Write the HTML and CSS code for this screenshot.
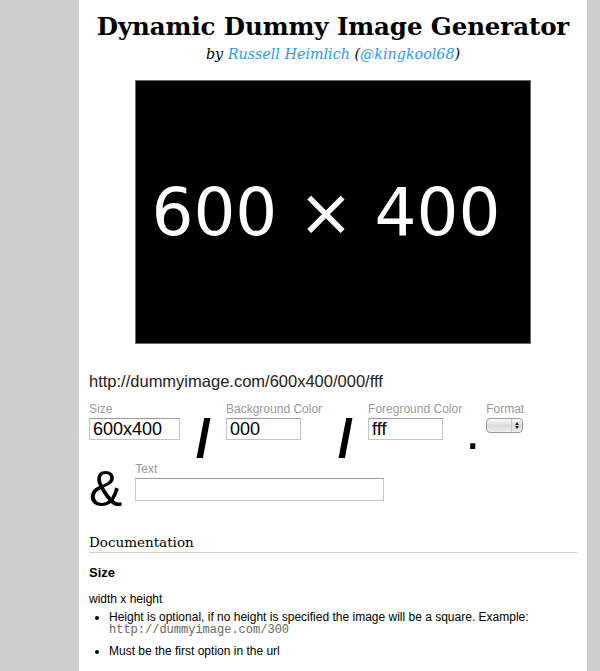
FILE: index.html
```html
<!DOCTYPE html>
<html>
<head>
<meta charset="utf-8">
<title>Dynamic Dummy Image Generator</title>
<link rel="stylesheet" href="styles.css">
</head>
<body>
<div class="page">
  <h1 class="title">Dynamic Dummy Image Generator</h1>
  <p class="byline">by <a href="#">Russell Heimlich</a> (<a href="#">@kingkool68</a>)</p>

  <div class="preview"><span class="preview-text">600 × 400</span></div>

  <p class="url">http://dummyimage.com/600x400/000/fff</p>

  <div class="form-row">
    <div class="field">
      <label class="label">Size</label>
      <input class="input input-size" type="text" value="600x400">
    </div>
    <span class="sep slash">/</span>
    <div class="field">
      <label class="label">Background Color</label>
      <input class="input input-color" type="text" value="000">
    </div>
    <span class="sep slash">/</span>
    <div class="field">
      <label class="label">Foreground Color</label>
      <input class="input input-color" type="text" value="fff">
    </div>
    <span class="sep dot">.</span>
    <div class="field">
      <label class="label">Format</label>
      <span class="select"><span class="select-body"></span><span class="select-arrows"><span class="arr-up"></span><span class="arr-down"></span></span></span>
    </div>
  </div>

  <div class="form-row row-text">
    <span class="amp">&amp;</span>
    <div class="field">
      <label class="label">Text</label>
      <input class="input input-text" type="text" value="">
    </div>
  </div>

  <h2 class="doc-title">Documentation</h2>
  <h3 class="doc-sub">Size</h3>
  <p class="doc-p">width x height</p>
  <ul class="doc-list">
    <li>Height is optional, if no height is specified the image will be a square. Example: <code>http://dummyimage.com/300</code></li>
    <li>Must be the first option in the url</li>
  </ul>
</div>
</body>
</html>
```
FILE: styles.css
```css
html, body {
  margin: 0;
  padding: 0;
  background: #cecece;
}
body {
  font-family: "Liberation Sans", Arial, sans-serif;
  color: #000;
}
.page {
  margin-left: 79px;
  width: 488px;
  min-height: 671px;
  padding: 12px 10px 0;
  background: #fff;
}
.title {
  margin: 0;
  font-family: "DejaVu Serif", Georgia, serif;
  font-weight: bold;
  font-size: 24.5px;
  line-height: 30px;
  text-align: center;
  letter-spacing: -0.1px;
}
.byline {
  margin: 3px 0 0;
  font-family: "DejaVu Serif", Georgia, serif;
  font-style: italic;
  font-size: 14.3px;
  line-height: 18px;
  text-align: center;
}
.byline a {
  color: #2b9bf0;
  text-decoration: none;
}
.preview {
  width: 394px;
  height: 262px;
  margin: 17px auto 0;
  background: #000;
  border: 1px solid #6a6a6a;
  display: flex;
  align-items: center;
  justify-content: center;
}
.preview-text {
  font-family: "DejaVu Sans", sans-serif;
  color: #fff;
  font-size: 66px;
  line-height: 1;
  margin-top: 2px;
  margin-right: 14px;
}
.url {
  margin: 26px 0 0;
  font-size: 16.5px;
  line-height: 22px;
  color: #222;
}
.form-row {
  display: flex;
  align-items: flex-start;
  margin-top: 8px;
}
.field {
  display: flex;
  flex-direction: column;
  align-items: flex-start;
}
.label {
  font-size: 12px;
  line-height: 14px;
  color: #999;
  margin-top: 2px;
  margin-bottom: 2px;
}
.input {
  box-sizing: border-box;
  height: 22px;
  margin: 0;
  padding: 0 3px;
  border: 1px solid #c4c4c4;
  border-top-color: #9a9a9a;
  font-family: "Liberation Sans", Arial, sans-serif;
  font-size: 18px;
  color: #000;
  background: #fff;
  outline: none;
}
.input-size { width: 91px; }
.input-color { width: 75px; }
.input-text { width: 249px; height: 23px; }
.sep {
  font-size: 54px;
  line-height: 40px;
  margin-top: 18px;
}
.slash {
  font-weight: bold;
  margin-left: 16px;
  margin-right: 15px;
}
.dot {
  margin-top: 10px;
  margin-left: 3px;
  margin-right: 6px;
}
.select {
  display: flex;
  width: 37px;
  height: 15px;
  box-sizing: border-box;
  border: 1px solid #9a9a9a;
  border-radius: 4px;
  background: linear-gradient(#fafafa, #dcdcdc 50%, #eeeeee);
  overflow: hidden;
}
.select-body { flex: 1; }
.select-arrows {
  width: 10px;
  border-left: 1px solid #c8c8c8;
  display: flex;
  flex-direction: column;
  align-items: center;
  justify-content: center;
  gap: 1px;
}
.arr-up {
  width: 0; height: 0;
  border-left: 2px solid transparent;
  border-right: 2px solid transparent;
  border-bottom: 3px solid #222;
}
.arr-down {
  width: 0; height: 0;
  border-left: 2px solid transparent;
  border-right: 2px solid transparent;
  border-top: 3px solid #222;
}
.row-text {
  margin-top: 2px;
}
.amp {
  font-size: 50px;
  line-height: 40px;
  margin-top: 9px;
  margin-right: 13px;
}
.doc-title {
  margin: 23px 0 0;
  padding-bottom: 0;
  font-family: "DejaVu Serif", Georgia, serif;
  font-weight: normal;
  font-size: 13.5px;
  line-height: 20px;
  border-bottom: 1px solid #cfcfcf;
}
.doc-sub {
  margin: 12px 0 0;
  font-size: 13px;
  font-weight: bold;
  line-height: 16px;
}
.doc-p {
  margin: 10px 0 0;
  font-size: 12px;
  line-height: 16px;
}
.doc-list {
  margin: 4px 0 0;
  padding-left: 20px;
  font-size: 12px;
  line-height: 12px;
}
.doc-list li {
  margin-bottom: 9px;
}
.doc-list code {
  font-family: "Liberation Mono", "Courier New", monospace;
  font-size: 12px;
  color: #666;
}
```
